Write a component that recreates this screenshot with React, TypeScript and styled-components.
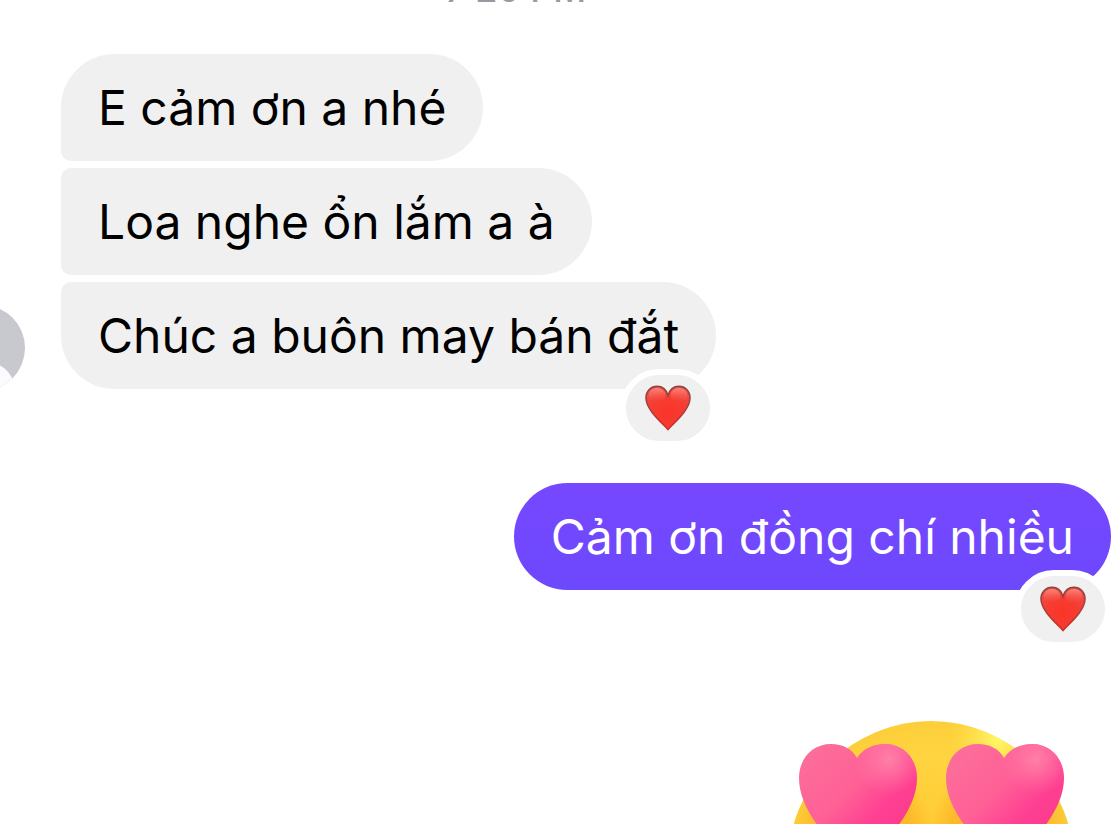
import React, { useId } from "react";
import styled, { createGlobalStyle, css } from "styled-components";

const GlobalStyle = createGlobalStyle`
  *, *::before, *::after { box-sizing: border-box; }
  body {
    margin: 0;
    background: #ffffff;
    font-family: Inter, "Noto Sans", "Liberation Sans", sans-serif;
  }
`;

const Thread = styled.main`
  display: flex;
  flex-direction: column;
  height: 100vh;
  overflow: hidden;
`;

const Timestamp = styled.time`
  flex: none;
  height: 40px;
  margin: -31px 86px 45px 0;
  text-align: center;
  font-size: 36px;
  line-height: 40px;
  font-weight: 500;
  color: #9a9a9e;
`;

const IncomingGroup = styled.section`
  flex: none;
  display: flex;
  align-items: flex-end;
  gap: 36px;
  margin: 0 16px 94px -61px;
`;

const AvatarIcon = styled.svg`
  flex: none;
  width: 86px;
  height: 84px;
`;

const BubbleStack = styled.div`
  display: flex;
  flex-direction: column;
  align-items: flex-start;
  gap: 7px;
`;

const OutgoingGroup = styled.section`
  flex: none;
  display: flex;
  justify-content: flex-end;
  margin: 0 6px 131px 16px;
`;

type Position = "first" | "middle" | "last" | "single";

const corners: Record<Position, string> = {
  first: "54px 54px 54px 10px",
  middle: "10px 54px 54px 10px",
  last: "10px 54px 54px 54px",
  single: "54px",
};

const Bubble = styled.div<{ $position: Position; $own?: boolean }>`
  position: relative;
  padding: 22px 37px 21px;
  border-radius: ${(p) => corners[p.$position]};
  font-size: 48px;
  line-height: 64px;
  ${(p) =>
    p.$own
      ? css`
          background: linear-gradient(#7648ff, #6d48fc);
          color: #ffffff;
        `
      : css`
          background: #f0f0f0;
          color: #000000;
        `}
`;

const Text = styled.p`
  margin: 0;
`;

const Reaction = styled.button`
  position: absolute;
  right: 0;
  bottom: -58px;
  display: flex;
  align-items: center;
  justify-content: center;
  width: 96px;
  height: 78px;
  padding: 0;
  border: 6px solid #ffffff;
  border-radius: 39px;
  background: #f0f0f0;
`;

const HeartIcon = styled.svg`
  width: 46px;
  height: 46px;
`;

const StickerRow = styled.section`
  flex: none;
  display: flex;
  justify-content: flex-end;
  margin-right: 43px;
`;

const StickerIcon = styled.svg`
  width: 286px;
  height: 286px;
`;

function Avatar() {
  return (
    <AvatarIcon viewBox="0 0 86 84" role="img" aria-label="Avatar">
      <defs>
        <clipPath id="avatar-clip">
          <circle cx="43" cy="43" r="43" />
        </clipPath>
      </defs>
      <g clipPath="url(#avatar-clip)">
        <rect width="86" height="86" fill="#c8c8cf" />
        <circle cx="43" cy="33" r="16" fill="#fbfbff" />
        <ellipse cx="43" cy="82" rx="32" ry="26" fill="#fbfbff" />
      </g>
    </AvatarIcon>
  );
}

function HeartReaction() {
  const id = useId();
  const d =
    "M23 44.500C19.500 40.500 12 34 6.800 27C3.200 22 1 17.500 1 12.800C1 6 6 1.300 12 1.300C17.500 1.300 21.500 5 23 10.500C24.500 5 28.500 1.300 34 1.300C40 1.300 45 6 45 12.800C45 17.500 42.800 22 39.200 27C34 34 26.500 40.500 23 44.500Z";
  return (
    <Reaction type="button" aria-label="Love reaction">
      <HeartIcon viewBox="0 0 46 46" aria-hidden="true">
        <defs>
          <radialGradient id={`${id}-fill`} cx="0.5" cy="0.6" r="0.6">
            <stop offset="0" stopColor="#fb3428" />
            <stop offset="0.6" stopColor="#f63c32" />
            <stop offset="1" stopColor="#ef4a42" />
          </radialGradient>
          <linearGradient id={`${id}-shine`} x1="0" y1="0" x2="0" y2="1">
            <stop offset="0" stopColor="#ffa59c" stopOpacity="0.65" />
            <stop offset="1" stopColor="#ff6a5c" stopOpacity="0" />
          </linearGradient>
          <linearGradient id={`${id}-edge`} x1="0" y1="0" x2="0" y2="1">
            <stop offset="0" stopColor="#8a4640" />
            <stop offset="0.5" stopColor="#a8423a" />
            <stop offset="1" stopColor="#cc2c22" />
          </linearGradient>
        </defs>
        <path d={d} fill={`url(#${id}-fill)`} stroke={`url(#${id}-edge)`} strokeWidth="1.600" />
        <ellipse cx="12" cy="10" rx="8.500" ry="7" fill={`url(#${id}-shine)`} />
        <ellipse cx="34" cy="10" rx="8.500" ry="7" fill={`url(#${id}-shine)`} />
      </HeartIcon>
    </Reaction>
  );
}

function HeartEyesSticker() {
  const heart =
    "M58 14C64 5 74 0 86 0C105 0 118 15 118 34C118 60 99 86 72 112C63 120 54 120 46 112C19 86 0 60 0 34C0 15 13 0 32 0C44 0 53 5 58 14Z";
  return (
    <StickerIcon viewBox="0 0 286 286" role="img" aria-label="Smiling face with heart eyes">
      <defs>
        <radialGradient id="face" gradientUnits="userSpaceOnUse" cx="143" cy="143" r="143">
          <stop offset="0" stopColor="#ffc72e" />
          <stop offset="0.75" stopColor="#ffd440" />
          <stop offset="1" stopColor="#fccf3a" />
        </radialGradient>
        <radialGradient id="glow" gradientUnits="userSpaceOnUse" cx="210" cy="18" r="50">
          <stop offset="0" stopColor="#fff96a" />
          <stop offset="1" stopColor="#ffe04a" stopOpacity="0" />
        </radialGradient>
        <radialGradient id="shade" cx="0.5" cy="0.5" r="0.5">
          <stop offset="0.7" stopColor="#f9a51e" stopOpacity="0.5" />
          <stop offset="1" stopColor="#f9a51e" stopOpacity="0" />
        </radialGradient>
        <linearGradient id="eye" x1="0.1" y1="0.1" x2="0.8" y2="0.8">
          <stop offset="0" stopColor="#fc6d9a" />
          <stop offset="0.45" stopColor="#ff6096" />
          <stop offset="0.75" stopColor="#ff4092" />
          <stop offset="1" stopColor="#fb3a8c" />
        </linearGradient>
        <radialGradient id="eyeShine" cx="0.76" cy="0.13" r="0.3">
          <stop offset="0" stopColor="#ff80a8" />
          <stop offset="1" stopColor="#ff6f9f" stopOpacity="0" />
        </radialGradient>
        <clipPath id="faceClip">
          <circle cx="143" cy="143" r="143" />
        </clipPath>
      </defs>
      <circle cx="143" cy="143" r="143" fill="url(#face)" />
      <g clipPath="url(#faceClip)">
        <circle cx="210" cy="18" r="50" fill="url(#glow)" />
        <ellipse cx="74" cy="108" rx="70" ry="64" fill="url(#shade)" />
        <ellipse cx="213" cy="108" rx="70" ry="64" fill="url(#shade)" />
        <path d="M92 206Q143 230 194 206Q184 256 143 256Q102 256 92 206Z" fill="#7a3517" />
      </g>
      <g transform="translate(11 23)">
        <path d={heart} fill="url(#eye)" />
        <path d={heart} fill="url(#eyeShine)" />
      </g>
      <g transform="translate(158 23)">
        <path d={heart} fill="url(#eye)" />
        <path d={heart} fill="url(#eyeShine)" />
      </g>
    </StickerIcon>
  );
}

const incoming: { text: string; position: Position; loved?: boolean }[] = [
  { text: "E cảm ơn a nhé", position: "first" },
  { text: "Loa nghe ổn lắm a à", position: "middle" },
  { text: "Chúc a buôn may bán đắt", position: "last", loved: true },
];

export default function App() {
  return (
    <>
      <GlobalStyle />
      <Thread lang="vi">
        <Timestamp>7:20 PM</Timestamp>
        <IncomingGroup>
          <Avatar />
          <BubbleStack>
            {incoming.map((m) => (
              <Bubble key={m.text} $position={m.position}>
                <Text>{m.text}</Text>
                {m.loved && <HeartReaction />}
              </Bubble>
            ))}
          </BubbleStack>
        </IncomingGroup>
        <OutgoingGroup>
          <Bubble $position="single" $own>
            <Text>Cảm ơn đồng chí nhiều</Text>
            <HeartReaction />
          </Bubble>
        </OutgoingGroup>
        <StickerRow>
          <HeartEyesSticker />
        </StickerRow>
      </Thread>
    </>
  );
}
